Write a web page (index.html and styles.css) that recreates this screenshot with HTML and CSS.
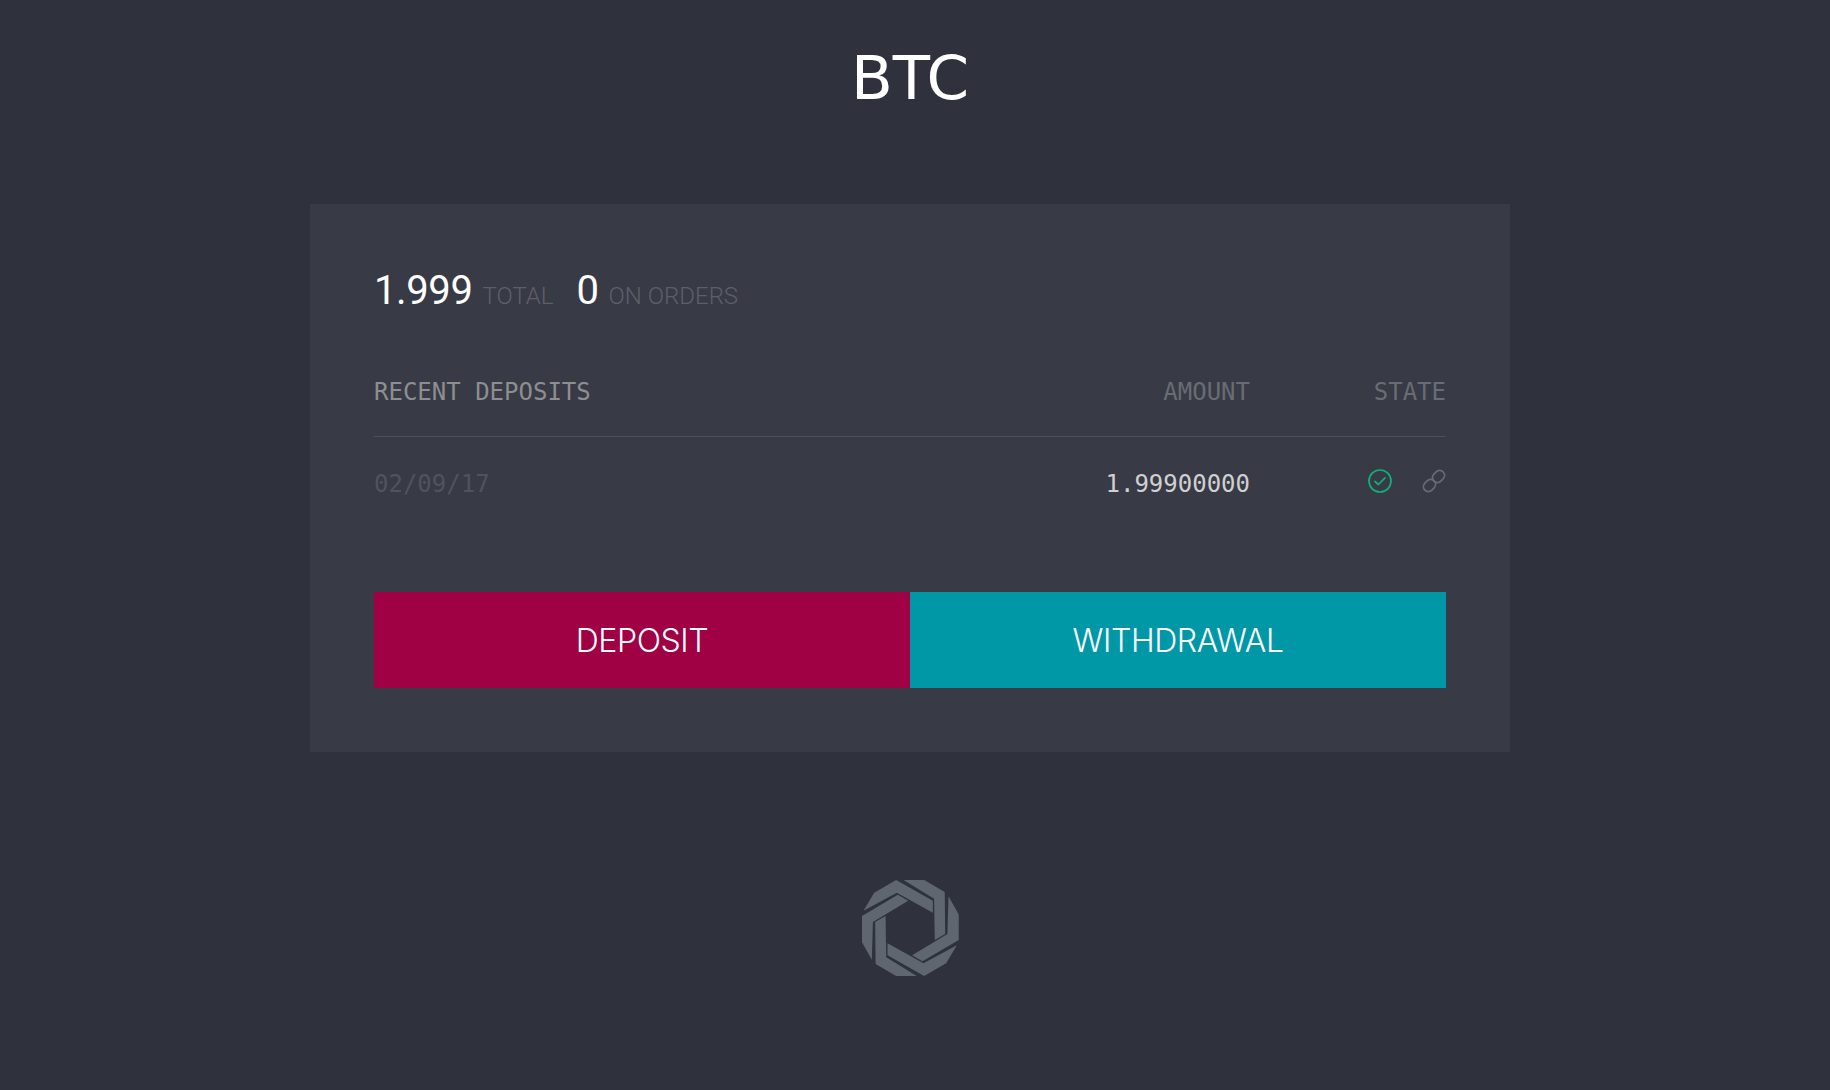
FILE: index.html
```html
<!DOCTYPE html>
<html lang="en">
<head>
<meta charset="utf-8">
<title>BTC</title>
<link rel="stylesheet" href="styles.css">
</head>
<body>
<h1 class="title">BTC</h1>
<main class="card">
  <div class="balance">
    <span class="num">1.999</span><span class="unit">TOTAL</span>
    <span class="num num-second">0</span><span class="unit">ON ORDERS</span>
  </div>
  <div class="row head">
    <span class="recent">RECENT DEPOSITS</span>
    <span class="amount-head">AMOUNT</span>
    <span class="state-head">STATE</span>
  </div>
  <div class="row body">
    <span class="date">02/09/17</span>
    <span class="amount">1.99900000</span>
    <span class="state">
      <svg class="icon" viewBox="0 0 24 24" fill="none" stroke="#0db27b" stroke-width="1.7" stroke-linecap="round" stroke-linejoin="round"><circle cx="12" cy="12" r="11"/><path d="M7 12.5l3.4 3 6.6-6.6"/></svg>
      <svg class="icon" viewBox="0 0 24 24" fill="none" stroke="#686b75" stroke-width="1.8"><rect x="10" y="2.6" width="13" height="9.8" rx="4.9" transform="rotate(-45 16.5 7.5)"/><rect x="1" y="11.6" width="13" height="9.8" rx="4.9" transform="rotate(-45 7.5 16.5)"/></svg>
    </span>
  </div>
  <div class="actions">
    <button class="btn deposit">DEPOSIT</button>
    <button class="btn withdrawal">WITHDRAWAL</button>
  </div>
</main>
<footer class="footer">
  <svg class="logo" viewBox="36 30 290 288" fill="#5f6670">
    <path id="strip" d="M40 122L72 68L138 30L248 92L248 128L140 68Z"/>
    <use href="#strip" transform="rotate(60 180 174)"/>
    <use href="#strip" transform="rotate(120 180 174)"/>
    <use href="#strip" transform="rotate(180 180 174)"/>
    <use href="#strip" transform="rotate(240 180 174)"/>
    <use href="#strip" transform="rotate(300 180 174)"/>
  </svg>
</footer>
</body>
</html>
```
FILE: styles.css
```css
* { box-sizing: border-box; }
html, body { margin: 0; padding: 0; }
html { background: #2f323d; }
body {
  width: 1820px;
  min-height: 1090px;
  background: #2f323d;
  font-family: "Roboto", "Liberation Sans", sans-serif;
  display: flex;
  flex-direction: column;
  align-items: center;
}
.title {
  margin: 0;
  height: 204px;
  padding-top: 43px;
  font-family: "DejaVu Sans", sans-serif;
  font-size: 61px;
  line-height: 70px;
  font-weight: 400;
  color: #fff;
}
.card {
  width: 1200px;
  height: 548px;
  padding: 63px 64px 64px;
  background: #383a45;
}
.balance {
  height: 47px;
  display: flex;
  align-items: baseline;
  line-height: 47px;
}
.num {
  font-size: 40px;
  font-weight: 400;
  letter-spacing: -0.4px;
  color: #fff;
}
.num-second { margin-left: 23px; }
.unit {
  margin-left: 10px;
  font-size: 24px;
  font-weight: 300;
  color: #5c5f6b;
}
.row {
  display: grid;
  grid-template-columns: 1fr 300px 196px;
  align-items: baseline;
  font-family: "DejaVu Sans Mono", monospace;
  font-size: 24px;
}
.head {
  margin-top: 64px;
  height: 58px;
  line-height: 28px;
  border-bottom: 1px solid #4c4e5a;
  box-sizing: content-box;
}
.recent { color: #8d8e91; }
.amount-head, .state-head { color: #686c75; text-align: right; }
.body {
  margin-top: 32px;
  height: 30px;
  line-height: 30px;
}
.date { color: #50535f; }
.amount { color: #cfd0d2; text-align: right; }
.state {
  display: flex;
  justify-content: flex-end;
  gap: 30px;
  align-self: center;
  margin-top: -6px;
}
.icon { width: 24px; height: 24px; display: block; }
.actions {
  display: grid;
  grid-template-columns: 1fr 1fr;
  margin-top: 93px;
}
.btn {
  height: 96px;
  border: 0;
  padding: 0;
  color: #fff;
  font-family: "Inter", "Liberation Sans", sans-serif;
  font-weight: 300;
  font-size: 32px;
  letter-spacing: -0.4px;
}
.deposit { background: #a00044; }
.withdrawal { background: #0097a7; }
.footer {
  margin-top: 128px;
  display: flex;
  justify-content: center;
}
.logo { width: 97px; height: 96px; display: block; }
```
